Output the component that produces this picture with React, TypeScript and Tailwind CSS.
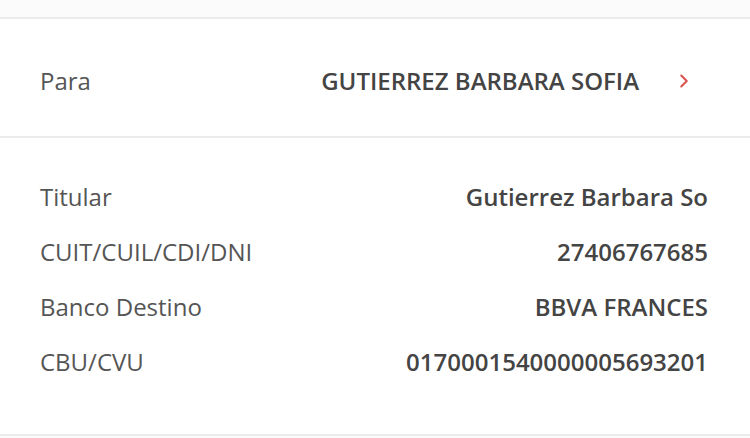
import { ChevronRight } from 'lucide-react';

interface DetailRow {
  label: string;
  value: string;
}

const rows: DetailRow[] = [
  { label: 'Titular', value: 'Gutierrez Barbara So' },
  { label: 'CUIT/CUIL/CDI/DNI', value: '27406767685' },
  { label: 'Banco Destino', value: 'BBVA FRANCES' },
  { label: 'CBU/CVU', value: '0170001540000005693201' },
];

const App = () => {
  return (
    <div className="w-[750px] h-[438px] overflow-hidden bg-[#fbfbfb] font-['Open_Sans',sans-serif]">
      <div className="h-[17px] bg-[#fbfbfb]" />

      {/* Destinatario */}
      <div className="h-[121px] bg-white border-y-2 border-[#ebebeb] flex items-center pt-[6px] pl-10 pr-[55px]">
        <span className="text-[24px] text-[#555]">Para</span>
        <span className="ml-auto text-[24px] font-semibold text-[#444]">GUTIERREZ BARBARA SOFIA</span>
        <ChevronRight className="ml-[34px] w-[22px] h-[22px] text-[#d9534f]" strokeWidth={2.25} />
      </div>

      {/* Datos de la cuenta */}
      <div className="h-[298px] bg-white border-b-2 border-[#ebebeb] pl-10 pr-[42px] pt-[42px] flex flex-col gap-[22px]">
        {rows.map(row => (
          <div key={row.label} className="flex items-center justify-between h-[33px]">
            <span className="text-[24px] text-[#555]">{row.label}</span>
            <span className="text-[24px] font-semibold text-[#444]">{row.value}</span>
          </div>
        ))}
      </div>
    </div>
  );
};

export default App;
